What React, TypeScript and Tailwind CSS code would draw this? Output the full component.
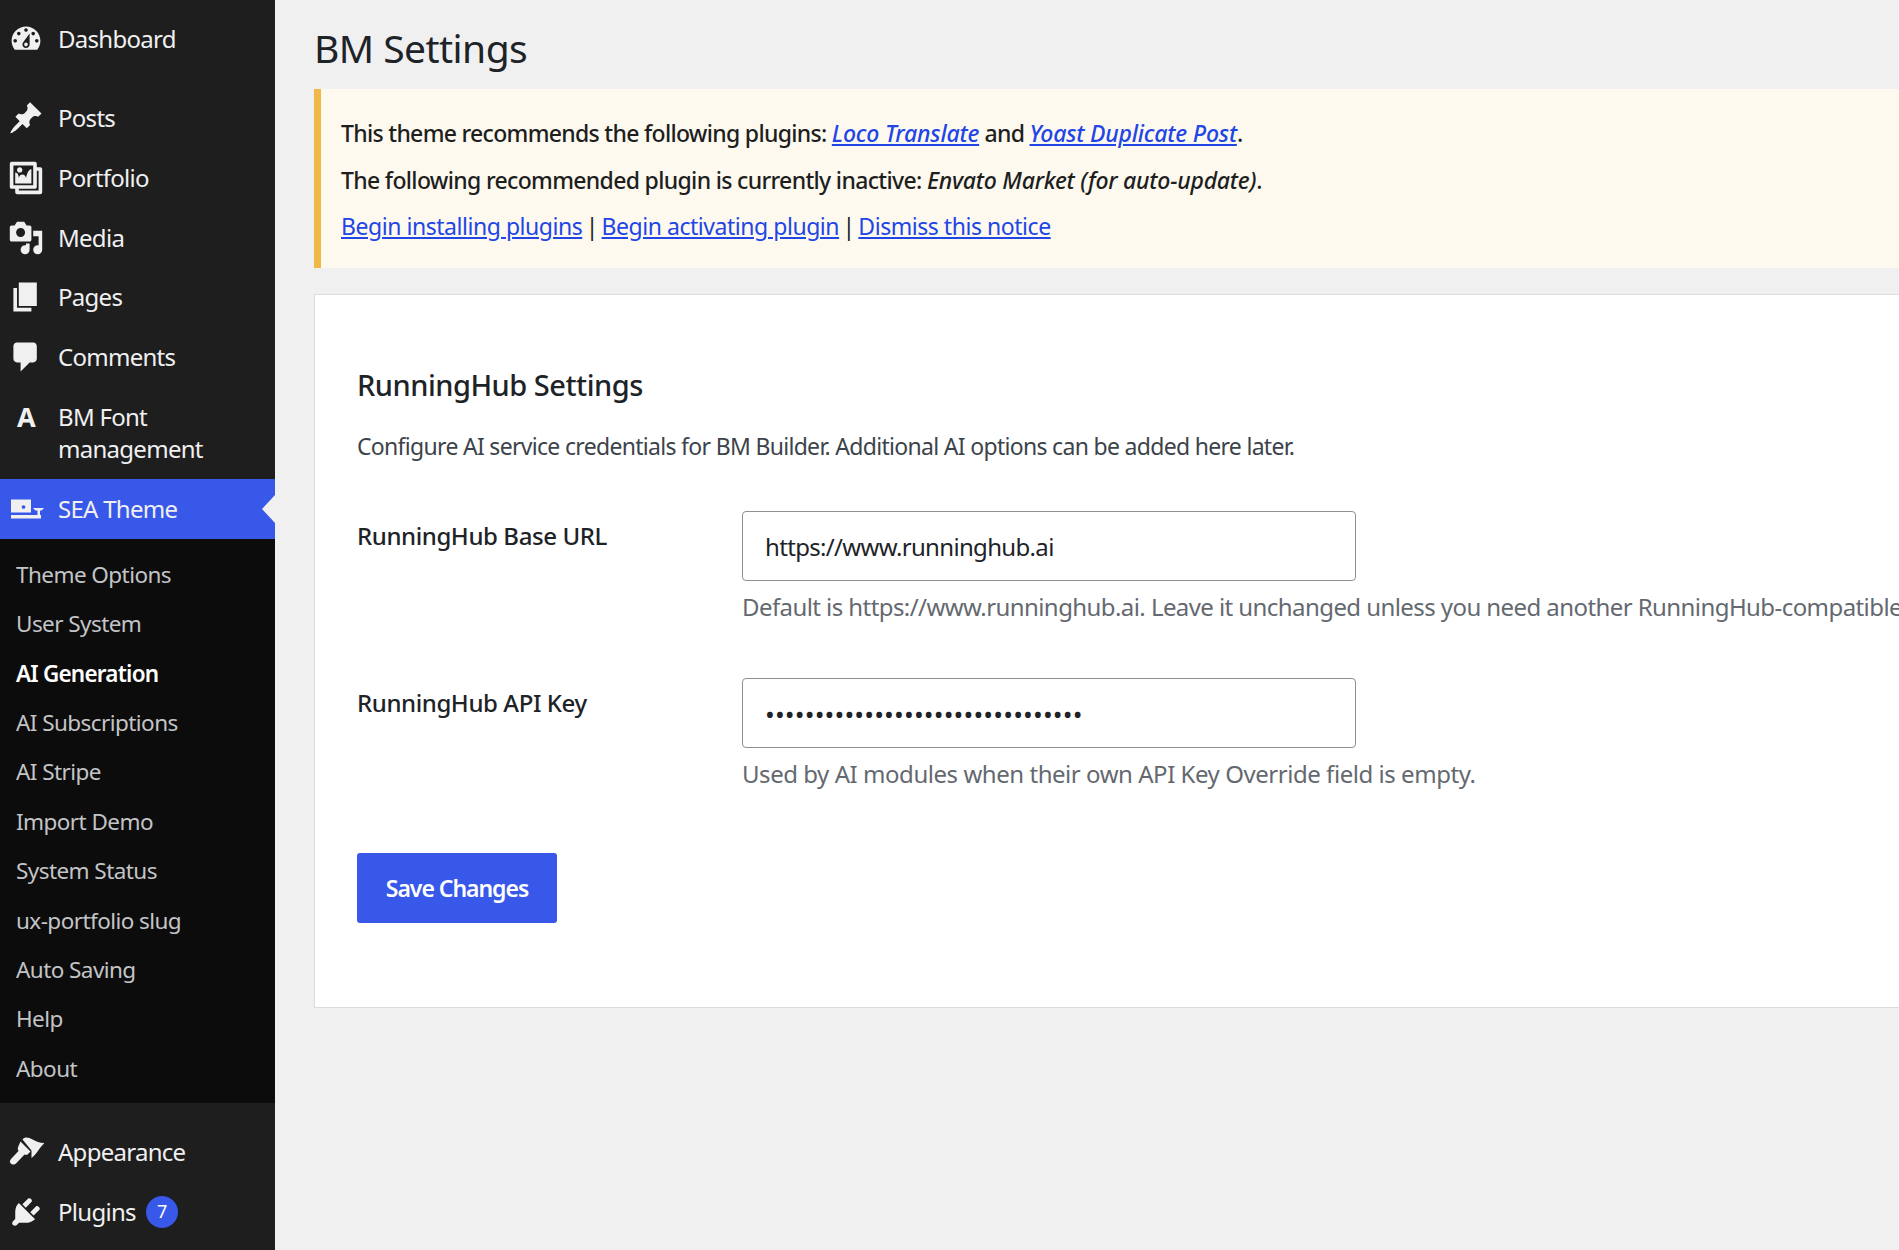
import type { ReactNode } from "react";

const PATHS = {
  dashboard:
    "M3.76 16h12.48c1.1-1.37 1.76-3.11 1.76-5 0-4.42-3.58-8-8-8s-8 3.58-8 8c0 1.89.66 3.63 1.76 5zM10 4c.55 0 1 .45 1 1s-.45 1-1 1-1-.45-1-1 .45-1 1-1zM6 6c.55 0 1 .45 1 1s-.45 1-1 1-1-.45-1-1 .45-1 1-1zm8 0c.55 0 1 .45 1 1s-.45 1-1 1-1-.45-1-1 .45-1 1-1zm-5.37 5.55L12 7v6c0 1.1-.9 2-2 2s-2-.9-2-2c0-.57.24-1.08.63-1.45zM4 10c.55 0 1 .45 1 1s-.45 1-1 1-1-.45-1-1 .45-1 1-1zm12 0c.55 0 1 .45 1 1s-.45 1-1 1-1-.45-1-1 .45-1 1-1zm-5 3c0-.55-.45-1-1-1s-1 .45-1 1 .45 1 1 1 1-.45 1-1z",
  posts:
    "M10.44 3.02l1.82-1.82 6.36 6.35-1.83 1.82c-1.05-.68-2.48-.57-3.41.36l-.75.75c-.92.93-1.04 2.35-.35 3.41l-1.83 1.82-2.41-2.41-2.8 2.79c-.42.42-3.38 2.71-3.8 2.29s1.86-3.39 2.28-3.81l2.79-2.79L4.1 9.36l1.83-1.82c1.05.69 2.48.57 3.4-.36l.75-.75c.93-.92 1.05-2.35.36-3.41z",
  portfolio:
    "M16 4h1.96c.57 0 1.04.47 1.04 1.04v12.92c0 .57-.47 1.04-1.04 1.04H5.04C4.47 19 4 18.53 4 17.96V16H2.04C1.47 16 1 15.53 1 14.96V2.04C1 1.47 1.47 1 2.04 1h12.92c.57 0 1.04.47 1.04 1.04V4zM3 14h11V3H3v11zm5-8.5C8 4.67 7.33 4 6.5 4S5 4.67 5 5.5 5.67 7 6.5 7 8 6.33 8 5.5zm2 4.5s1-5 3-5v8H4V7c2 0 2 3 2 3s.33-2 2-2 2 2 2 2zm7 7V6h-1v8.96c0 .57-.47 1.04-1.04 1.04H6v1h11z",
  media:
    "M13 11V4c0-.55-.45-1-1-1h-1.67L9 1H5L3.67 3H2c-.55 0-1 .45-1 1v7c0 .55.45 1 1 1h10c.55 0 1-.45 1-1zM7 4.5c1.38 0 2.5 1.12 2.5 2.5S8.38 9.5 7 9.5 4.5 8.38 4.5 7 5.62 4.5 7 4.5zM14 6h5v10.5c0 1.38-1.12 2.5-2.5 2.5S14 17.88 14 16.5s1.12-2.5 2.5-2.5c.17 0 .34.02.5.05V9h-3V6zm-4 8.05V13h2v3.5c0 1.38-1.12 2.5-2.5 2.5S7 17.88 7 16.5 8.12 14 9.5 14c.17 0 .34.02.5.05z",
  pages: "M6 15V2h10v13H6zm-1 1h8v2H3V5h2v11z",
  comments:
    "M5 2h9c1.1 0 2 .9 2 2v7c0 1.1-.9 2-2 2h-2l-5 5v-5H5c-1.1 0-2-.9-2-2V4c0-1.1.9-2 2-2z",
  plugins:
    "M13.11 4.36L9.87 7.6 8 5.73l3.24-3.24c.35-.34 1.05-.2 1.56.32.52.51.66 1.21.31 1.55zm-8 1.77l.91-1.12 9.01 9.01-1.19.84c-.71.71-2.63 1.16-3.82 1.16H6.14L4.9 17.26c-.59.59-1.54.59-2.12 0-.59-.58-.59-1.53 0-2.12l1.24-1.24v-3.88c0-1.13.4-3.19 1.09-3.89zm7.26 3.97l3.24-3.24c.34-.35 1.04-.21 1.55.31.52.51.66 1.21.31 1.55l-3.24 3.25z",
};

function Icon({ name }: { name: keyof typeof PATHS }) {
  return (
    <svg viewBox="0 0 20 20" className="h-9 w-9 shrink-0 fill-[#f0f0f1]">
      <path d={PATHS[name]} />
    </svg>
  );
}

// these two did not match the dashicon set, traced from the picture
function BrushIcon() {
  return (
    <svg viewBox="3 4 36 36" className="h-9 w-9 shrink-0 fill-[#f0f0f1]">
      <path d="M15.5 11.5L25.5 21.5L22.5 24.5C21.5 25 20.5 25 19.5 24.5L11.5 33C9.5 35 7 35 5.8 33.6C4.5 32 4.8 30.5 6 29L13.5 21C12.5 19.5 12.5 18 13.5 16Z" />
      <path d="M17.5 9.5C20 6.5 24 7.5 27.5 9.5C31 11.5 35 13 39.5 13C36.5 15.5 34.5 18.5 32.5 21.5C30.5 24.5 28.5 26.5 26.5 28L26.5 20.5Z" />
    </svg>
  );
}

function SeaIcon() {
  return (
    <svg viewBox="3 1.5 36 36" className="h-9 w-9 shrink-0 fill-[#f0f0f1]">
      <path fillRule="evenodd" d="M6 10H26V23H6ZM18.5 15.7a1.8 1.8 0 1 0 .01 0Z" />
      <path d="M6 25.5H36V29H6Z" />
      <path d="M28 18.5H39L36.5 21H35V26H32.5V21H30.5Z" />
    </svg>
  );
}

function MenuRow({ icon, label, extra }: { icon: ReactNode; label: string; extra?: ReactNode }) {
  return (
    <div className="flex h-[59.75px] items-center gap-[14px] pl-2 text-[24px] tracking-[-0.03em] text-[#f0f0f1]">
      {icon}
      <span>{label}</span>
      {extra}
    </div>
  );
}

const SUBMENU = [
  "Theme Options",
  "User System",
  "AI Generation",
  "AI Subscriptions",
  "AI Stripe",
  "Import Demo",
  "System Status",
  "ux-portfolio slug",
  "Auto Saving",
  "Help",
  "About",
];

function Sidebar() {
  return (
    <aside className="w-[275px] shrink-0 bg-[#1e1e1e] pt-[9px]">
      <MenuRow icon={<Icon name="dashboard" />} label="Dashboard" />
      <div className="h-[19.5px]" />
      <MenuRow icon={<Icon name="posts" />} label="Posts" />
      <MenuRow icon={<Icon name="portfolio" />} label="Portfolio" />
      <MenuRow icon={<Icon name="media" />} label="Media" />
      <MenuRow icon={<Icon name="pages" />} label="Pages" />
      <MenuRow icon={<Icon name="comments" />} label="Comments" />

      {/* two line item with a letter for an icon */}
      <div className="flex h-[91.5px] items-start gap-[14px] pl-2 pt-[13.5px] text-[24px] leading-[32px] tracking-[-0.03em] text-[#f0f0f1]">
        <span className="w-9 shrink-0 text-center text-[27px] font-bold">A</span>
        <span>
          BM Font
          <br />
          management
        </span>
      </div>

      <div className="relative flex h-[60.5px] items-center bg-[#3858e9]">
        <MenuRow icon={<SeaIcon />} label="SEA Theme" />
        <div className="absolute right-0 top-[16px] h-0 w-0 border-y-[14px] border-r-[13px] border-y-transparent border-r-[#f0f0f1]" />
      </div>

      <ul className="bg-[#0c0c0c] pb-[9.5px] pt-[11px] text-[22.5px] tracking-[-0.025em] text-[#c3c4c7]">
        {SUBMENU.map((item) => (
          <li
            key={item}
            className={`flex h-[49.4px] items-center pl-4 ${
              item === "AI Generation" ? "font-semibold tracking-[-0.035em] text-white" : ""
            }`}
          >
            {item}
          </li>
        ))}
      </ul>

      <div className="h-[19.5px]" />
      <MenuRow icon={<BrushIcon />} label="Appearance" />
      <MenuRow
        icon={<Icon name="plugins" />}
        label="Plugins"
        extra={
          <span className="-ml-[4px] flex h-8 w-8 items-center justify-center rounded-full bg-[#3858e9] text-[18px] text-white">
            7
          </span>
        }
      />
    </aside>
  );
}

function Field({ label, input, help }: { label: string; input: ReactNode; help: ReactNode }) {
  return (
    <div className="flex">
      <label className="w-[385px] shrink-0 pt-[7px] text-[24px] font-medium leading-[36px] tracking-[-0.017em] text-[#1d2327]">
        {label}
      </label>
      <div>
        {input}
        {help}
      </div>
    </div>
  );
}

export default function App() {
  return (
    <div className="flex h-[1250px] w-[1899px] overflow-hidden bg-[#f0f0f1] font-['Noto_Sans',sans-serif]">
      <Sidebar />
      <main className="-mr-10 min-w-0 flex-1 pl-[39px]">
        <h1 className="pt-[23px] text-[39px] leading-[49px] tracking-[-0.014em] text-[#1d2327]">BM Settings</h1>

        {/* plugin notice */}
        <div className="mt-[17px] h-[179px] border-l-[7px] border-[#f0b849] bg-[#fdf9ef] pl-[20px] pt-[21px] text-[23px] leading-[46.5px] text-[#1e1e1e]">
          <p className="font-medium tracking-[-0.03em]">
            This theme recommends the following plugins:{" "}
            <a href="#" className="italic tracking-[-0.008em] text-[#2145e6] underline">Loco Translate</a> and{" "}
            <a href="#" className="italic tracking-[-0.008em] text-[#2145e6] underline">Yoast Duplicate Post</a>.
          </p>
          <p className="font-medium tracking-[-0.029em]">
            The following recommended plugin is currently inactive:{" "}
            <em className="tracking-[-0.01em]">Envato Market (for auto-update)</em>.
          </p>
          <p className="tracking-[-0.02em]">
            <a href="#" className="text-[#2145e6] underline">Begin installing plugins</a>
            <span className="-mx-[2px]"> | </span>
            <a href="#" className="text-[#2145e6] underline">Begin activating plugin</a>
            <span className="-mx-[2px]"> | </span>
            <a href="#" className="text-[#2145e6] underline">Dismiss this notice</a>
          </p>
        </div>

        {/* settings card */}
        <section className="mt-[26px] h-[714px] border border-[#dcdcde] bg-white pl-[42px] pt-[68px]">
          <h2 className="text-[29px] font-medium leading-[44px] tracking-[-0.017em] text-[#1d2327]">RunningHub Settings</h2>
          <p className="mt-[21px] text-[23px] leading-[36px] tracking-[-0.03em] text-[#3c434a]">
            Configure AI service credentials for BM Builder. Additional AI options can be added here later.
          </p>
          <div className="mt-[47px] flex flex-col gap-[53px]">
            <Field
              label="RunningHub Base URL"
              input={
                <input
                  readOnly
                  type="text"
                  value="https://www.runninghub.ai"
                  className="block h-[70px] w-[614px] rounded-[4px] border border-[#8c8f94] bg-white pl-[22px] text-[24px] tracking-[-0.028em] text-[#1d2327] outline-none"
                />
              }
              help={
                <p className="mt-[8px] whitespace-nowrap text-[24px] leading-[36px] tracking-[-0.024em] text-[#646970]">
                  Default is https://www.runninghub.ai. Leave it unchanged unless you need another RunningHub-compatible endpoint.
                </p>
              }
            />
            <Field
              label="RunningHub API Key"
              input={
                <input
                  readOnly
                  type="password"
                  value="12345678901234567890123456789012"
                  className="block h-[70px] w-[614px] rounded-[4px] border border-[#8c8f94] bg-white pl-[22px] pt-[2px] text-[26px] tracking-[0.15px] text-[#1d2327] outline-none"
                />
              }
              help={
                <p className="mt-[8px] whitespace-nowrap text-[24px] leading-[36px] tracking-[-0.019em] text-[#646970]">
                  Used by AI modules when their own API Key Override field is empty.
                </p>
              }
            />
          </div>
          <button className="mt-[61px] h-[70px] w-[200px] rounded-[3px] bg-[#3858e9] text-[23px] font-semibold tracking-[-0.045em] text-white">
            Save Changes
          </button>
        </section>
      </main>
    </div>
  );
}
